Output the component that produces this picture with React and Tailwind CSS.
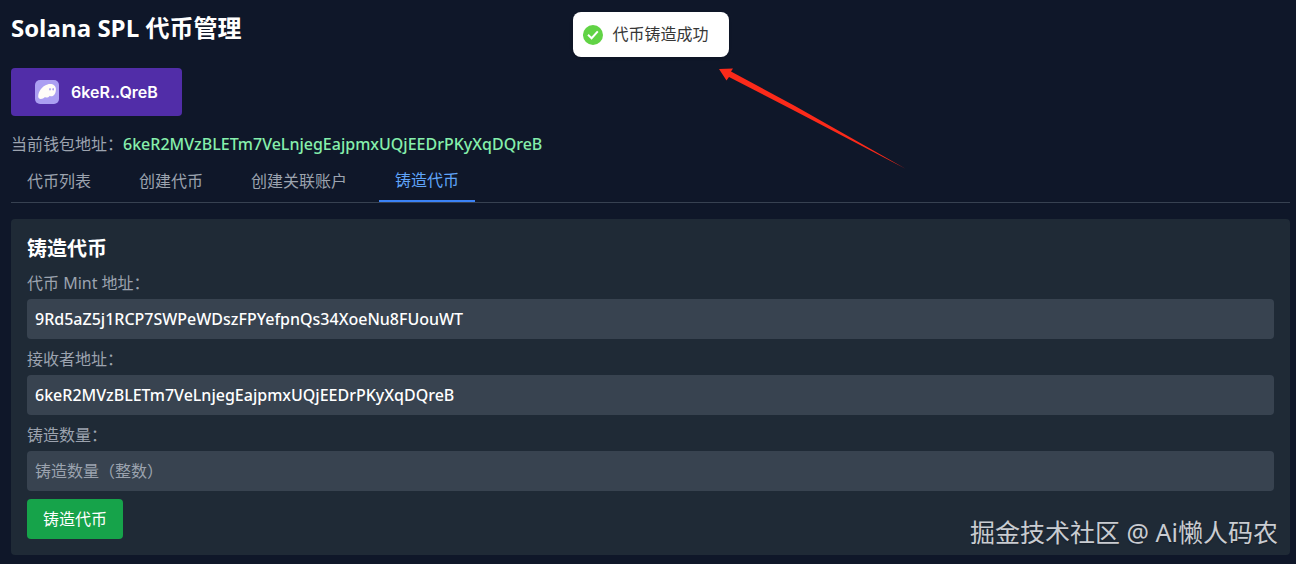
import { useState } from "react";

const WALLET = "6keR2MVzBLETm7VeLnjegEajpmxUQjEEDrPKyXqDQreB";

const tabs = ["代币列表", "创建代币", "创建关联账户", "铸造代币"];

function GhostIcon() {
  return (
    <svg className="size-6" viewBox="0 0 24 24" aria-hidden="true">
      <rect width="24" height="24" rx="5" fill="#ab9ff2" />
      <path
        d="M3.2 16.6C3.2 11.500 7 5.800 12.500 4.400c4.700-1.100 8.600.9 8.400 5.300-.1 3.800-2.200 6.600-4.400 6.600-.8 0-1.300-.2-1.600-.6-1 1.300-2.200 1.900-3.400 1.900-.7 0-1.100-.2-1.400-.6-1.300 1.300-2.800 2-4.200 2-1.700 0-2.700-.9-2.700-2.400z"
        fill="#fffdf8"
      />
      <ellipse cx="15" cy="9.300" rx="0.8" ry="1.300" fill="#ab9ff2" />
      <ellipse cx="18.200" cy="9.300" rx="0.8" ry="1.300" fill="#ab9ff2" />
    </svg>
  );
}

function Toast({ message }) {
  return (
    <div
      role="status"
      className="absolute top-0 left-1/2 -translate-x-1/2 flex items-center rounded-lg bg-white py-2.5 pl-2.5 pr-5 leading-[25px] text-[#363636] shadow-sm"
    >
      <svg className="size-5 mr-2.5" viewBox="0 0 20 20" aria-hidden="true">
        <circle cx="10" cy="10" r="10" fill="#61d345" />
        <path d="M5 9.800l3.600 3.400 6.200-6.800" fill="none" stroke="#fff" strokeWidth="2" />
      </svg>
      <span className="whitespace-nowrap">{message}</span>
    </div>
  );
}

function Arrow() {
  return (
    <svg
      className="absolute top-14 left-1/2 ml-17 w-[188px] h-[102px]"
      viewBox="0 0 188 102"
      aria-hidden="true"
    >
      <path d="M0 1L14 .5 12 3.500 76 38 187 101 74 42 10 9 7.500 12.500z" fill="#fb2a1a" />
    </svg>
  );
}

function Field({ id, label, ...props }) {
  return (
    <div className="mb-2">
      <label htmlFor={id} className="block mb-1 text-[#9ca3af]">
        {label}
      </label>
      <input
        id={id}
        className="block w-full h-10 p-2 rounded-sm bg-[#384350] text-white font-medium placeholder:text-[#9ca3af] placeholder:font-normal outline-none"
        {...props}
      />
    </div>
  );
}

export default function App() {
  const [active, setActive] = useState("铸造代币");

  return (
    <div className="min-h-screen bg-[#0f1729] pt-3 pl-[11px] pr-1.5 pb-2 text-base text-white font-['Noto_Sans','Noto_Sans_CJK_SC',sans-serif]">
      <main className="relative">
        <h1 className="text-2xl font-bold mb-6 font-['Open_Sans','Noto_Sans_CJK_SC',sans-serif]">
          Solana SPL 代币管理
        </h1>

        <button className="flex items-center gap-3 h-12 px-6 mb-4 rounded-sm bg-[#512da8] font-semibold font-['Inter',sans-serif]">
          <GhostIcon />
          6keR..QreB
        </button>

        <p className="mb-1 text-[#9ca3af]">
          当前钱包地址：<span className="font-medium text-[#86efac]">{WALLET}</span>
        </p>

        <nav className="flex gap-4 mb-4 border-b border-[#374151]">
          {tabs.map((tab) => (
            <button
              key={tab}
              onClick={() => setActive(tab)}
              className={
                tab === active
                  ? "px-4 py-2 text-[#60a5fa] border-b-2 border-[#3b82f6]"
                  : "px-4 py-2 text-[#9ca3af]"
              }
            >
              {tab}
            </button>
          ))}
        </nav>

        <section className="p-4 rounded-sm bg-[#1f2a36]">
          <h2 className="text-xl font-bold mb-2">铸造代币</h2>
          <Field
            id="mint"
            label="代币 Mint 地址："
            defaultValue="9Rd5aZ5j1RCP7SWPeWDszFPYefpnQs34XoeNu8FUouWT"
          />
          <Field id="receiver" label="接收者地址：" defaultValue={WALLET} />
          <Field id="amount" label="铸造数量：" placeholder="铸造数量（整数）" />
          <button className="px-4 py-2 rounded-sm bg-[#16a34a] text-white">铸造代币</button>
        </section>

        <div className="absolute right-3 bottom-1 text-[25px] text-[#c9ccd1] text-shadow-sm pointer-events-none">
          掘金技术社区 @ Ai懒人码农
        </div>
        <Toast message="代币铸造成功" />
        <Arrow />
      </main>
    </div>
  );
}
